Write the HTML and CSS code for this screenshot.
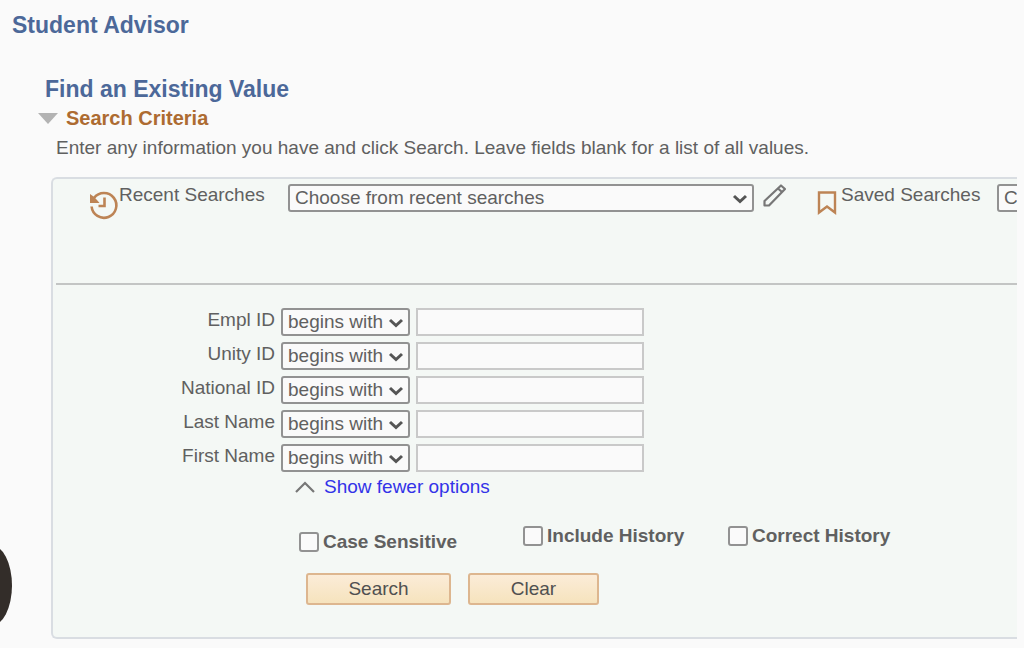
FILE: index.html
```html
<!DOCTYPE html>
<html lang="en">
<head>
  <meta charset="UTF-8">
  <title>Student Advisor</title>
  <link rel="stylesheet" href="styles.css">
</head>
<body>
  <div class="side-handle"></div>

  <main class="page">
    <h1>Student Advisor</h1>
    <h2>Find an Existing Value</h2>
    <h3>
      <svg class="collapse" width="20" height="11" viewBox="0 0 20 11"><path d="M0 0h20L10 11z" fill="#b3b3b3"/></svg>
      Search Criteria
    </h3>
    <p class="hint">Enter any information you have and click Search. Leave fields blank for a list of all values.</p>

    <form class="panel">
      <div class="searches">
        <svg class="icon-history" width="30" height="30" viewBox="0 0 30 30" fill="none" stroke="#bd8455" stroke-width="2.6">
          <path d="M5 7A12.400 12.400 0 1 1 2.600 15.500"/>
          <path d="M1 3v9h9.500L8 9 4.500 5.500z" fill="#bd8455" stroke="none"/>
          <path d="M15.500 6.500v8.500h-6"/>
        </svg>
        <label class="recent-label" for="recent">Recent Searches</label>
        <span class="select recent">
          <select id="recent"><option>Choose from recent searches</option></select>
          <svg class="chevron" width="16" height="10" viewBox="0 0 16 10"><path d="M2 2l6 5.500L14 2"/></svg>
        </span>
        <svg class="icon-edit" width="24" height="24" viewBox="0 0 24 24" fill="none" stroke="#777" stroke-width="2.2" stroke-linejoin="round">
          <path d="M1.500 21.500v-4.500L18 1.500l4 3.500L6 21.500z"/>
          <path d="M15 4.500l4 3.500"/>
        </svg>
        <svg class="icon-saved" width="20" height="24" viewBox="0 0 20 24" fill="none" stroke="#bd8455" stroke-width="2.4"><path d="M2 1.500h16v20l-8-6-8 6z"/></svg>
        <label class="saved-label" for="saved">Saved Searches</label>
        <span class="select saved">
          <select id="saved"><option>Choose from saved searches</option></select>
          <svg class="chevron" width="16" height="10" viewBox="0 0 16 10"><path d="M2 2l6 5.500L14 2"/></svg>
        </span>
      </div>

      <div class="fields">
        <div class="field">
          <label for="empl-id">Empl ID</label>
          <span class="select">
            <select aria-label="Empl ID operator"><option>begins with</option></select>
            <svg class="chevron" width="16" height="10" viewBox="0 0 16 10"><path d="M2 2l6 5.500L14 2"/></svg>
          </span>
          <input type="text" id="empl-id">
        </div>
        <div class="field">
          <label for="unity-id">Unity ID</label>
          <span class="select">
            <select aria-label="Unity ID operator"><option>begins with</option></select>
            <svg class="chevron" width="16" height="10" viewBox="0 0 16 10"><path d="M2 2l6 5.500L14 2"/></svg>
          </span>
          <input type="text" id="unity-id">
        </div>
        <div class="field">
          <label for="national-id">National ID</label>
          <span class="select">
            <select aria-label="National ID operator"><option>begins with</option></select>
            <svg class="chevron" width="16" height="10" viewBox="0 0 16 10"><path d="M2 2l6 5.500L14 2"/></svg>
          </span>
          <input type="text" id="national-id">
        </div>
        <div class="field">
          <label for="last-name">Last Name</label>
          <span class="select">
            <select aria-label="Last Name operator"><option>begins with</option></select>
            <svg class="chevron" width="16" height="10" viewBox="0 0 16 10"><path d="M2 2l6 5.500L14 2"/></svg>
          </span>
          <input type="text" id="last-name">
        </div>
        <div class="field">
          <label for="first-name">First Name</label>
          <span class="select">
            <select aria-label="First Name operator"><option>begins with</option></select>
            <svg class="chevron" width="16" height="10" viewBox="0 0 16 10"><path d="M2 2l6 5.500L14 2"/></svg>
          </span>
          <input type="text" id="first-name">
        </div>
      </div>

      <a class="fewer" href="#">
        <svg width="20" height="12" viewBox="0 0 20 12" fill="none" stroke="#777" stroke-width="2.200"><path d="M1 11l9-9 9 9"/></svg>
        Show fewer options
      </a>

      <div class="checks">
        <label class="check case"><input type="checkbox">Case Sensitive</label>
        <label class="check include"><input type="checkbox">Include History</label>
        <label class="check"><input type="checkbox">Correct History</label>
      </div>

      <div class="actions">
        <button type="button" class="search-btn">Search</button>
        <button type="button" class="clear-btn">Clear</button>
      </div>
    </form>
  </main>
</body>
</html>
```
FILE: styles.css
```css
:root {
  --bg: #fafafa;
  --panel: #f4f8f5;
  --text: #606060;
  --blue: #4c6899;
  --brown: #ad6b31;
}
* { box-sizing: border-box; }
body {
  margin: 0;
  font-family: "Liberation Sans", Arial, sans-serif;
  font-size: 19px;
  line-height: 24px;
  background: var(--bg);
  color: var(--text);
}
.page {
  padding: 11px 7px 0 12px;
  overflow: hidden;
}
h1, h2, h3, p { margin: 0; }
h1, h2 {
  font-size: 23px;
  line-height: 28px;
  color: var(--blue);
}
h2 { margin: 36px 0 0 33px; }
h3 {
  display: flex;
  align-items: center;
  gap: 8px;
  margin-left: 26px;
  font-size: 20px;
  line-height: 30px;
  color: var(--brown);
}
.hint {
  margin: 3px 0 0 44px;
  white-space: nowrap;
}
.panel {
  margin: 17px 0 9px 39px;
  padding: 5px 0 32px 3px;
  background: var(--panel);
  border: 2px solid #d9dde2;
  border-right: 0;
  border-radius: 6px 0 0 6px;
  overflow: hidden;
}
.searches {
  display: flex;
  align-items: flex-start;
  height: 101px;
  padding-left: 33px;
  border-bottom: 2px solid #c3c5c4;
  white-space: nowrap;
}
.searches svg, .searches label, .searches .select { flex-shrink: 0; }
.searches label { line-height: 22px; }
.icon-history { margin-top: 7px; }
.recent-label { width: 169px; }
.icon-edit { margin-left: 9px; }
.icon-saved { margin: 7px 4px 0 30px; }
.saved-label { width: 156px; }
.select {
  position: relative;
  display: block;
  width: 129px;
  height: 28px;
}
.select.recent { width: 466px; }
.select.saved { width: 300px; }
select {
  appearance: none;
  width: 100%;
  height: 28px;
  padding: 0 5px;
  font: inherit;
  color: var(--text);
  background: var(--bg);
  border: 2px solid #929292;
  border-radius: 3px;
}
.chevron {
  position: absolute;
  top: 10px;
  right: 6px;
  fill: none;
  stroke: #555;
  stroke-width: 3;
  pointer-events: none;
}
.fields {
  display: grid;
  gap: 6px;
  margin-top: 23px;
}
.field {
  display: flex;
  gap: 6px;
}
.field label {
  width: 219px;
  line-height: 24px;
  text-align: right;
}
.field input {
  width: 228px;
  height: 28px;
  font: inherit;
  background: var(--bg);
  border: 2px solid #c9c9c9;
}
.fewer {
  display: inline-flex;
  align-items: center;
  gap: 9px;
  margin: 3px 0 0 239px;
  color: #3333e8;
  text-decoration: none;
}
.checks {
  display: flex;
  align-items: flex-start;
  margin: 25px 0 0 243px;
  font-weight: bold;
  white-space: nowrap;
}
.check {
  display: flex;
  align-items: center;
  gap: 4px;
}
.check.case {
  width: 224px;
  margin-top: 6px;
}
.check.include { width: 205px; }
.check input {
  appearance: none;
  width: 20px;
  height: 20px;
  margin: 0;
  background: var(--bg);
  border: 2px solid #929292;
  border-radius: 3px;
}
.check input:checked { background: var(--blue); }
.actions {
  display: flex;
  gap: 17px;
  margin: 19px 0 0 250px;
}
button {
  height: 32px;
  padding: 0;
  font: inherit;
  color: #505050;
  background: linear-gradient(#fbecd8, #f6e3bd);
  border: 2px solid #ddb68f;
  border-radius: 3px;
  cursor: pointer;
}
.search-btn { width: 145px; }
.clear-btn { width: 131px; }
.side-handle {
  position: fixed;
  top: 545px;
  left: -30px;
  width: 42px;
  height: 81px;
  background: #332d29;
  border-radius: 50%;
}
```
